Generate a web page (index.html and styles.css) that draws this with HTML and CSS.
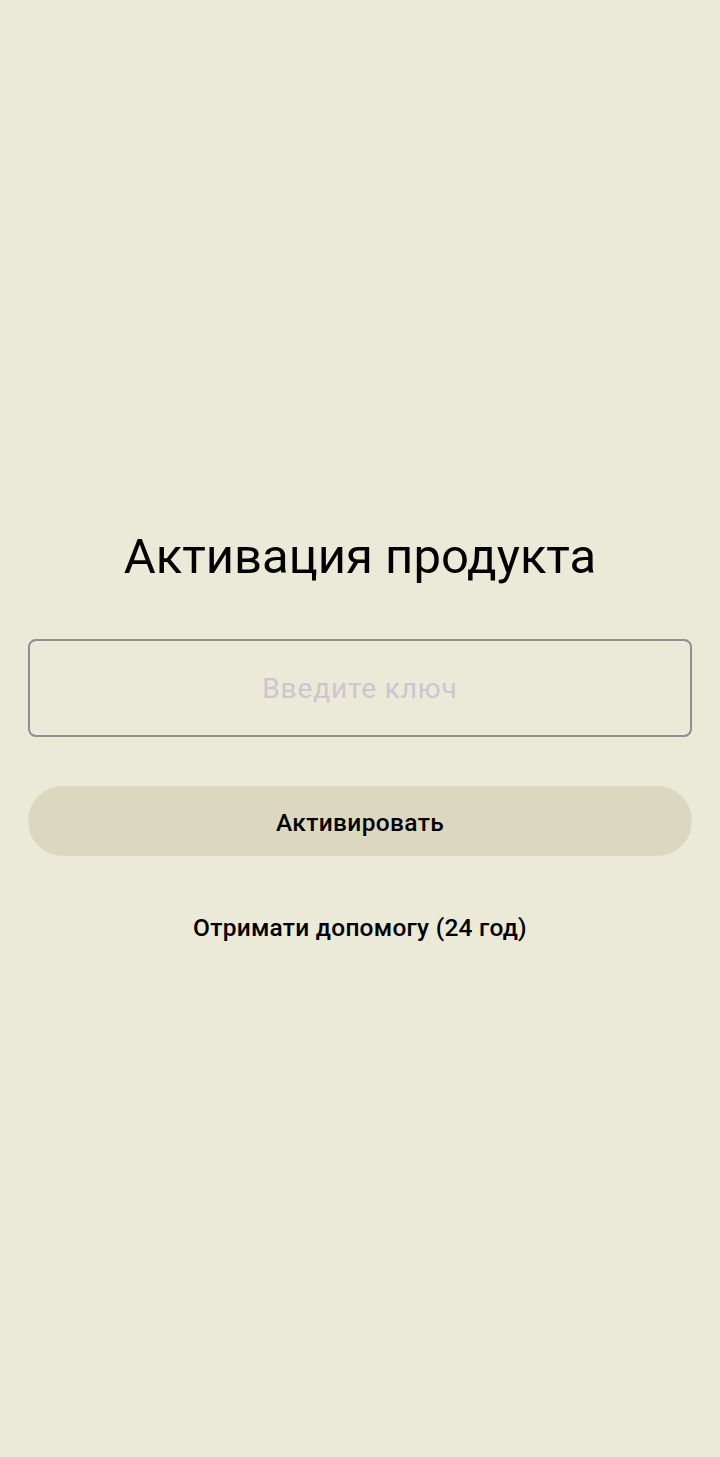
FILE: index.html
```html
<!DOCTYPE html>
<html lang="ru">
<head>
<meta charset="utf-8">
<title>Активация продукта</title>
<link rel="stylesheet" href="styles.css">
</head>
<body>
<main class="screen">
  <h1 class="title">Активация продукта</h1>
  <input class="key-input" type="text" placeholder="Введите ключ">
  <button class="activate-btn" type="button">Активировать</button>
  <a class="help-link" href="#">Отримати допомогу (24 год)</a>
</main>
</body>
</html>
```
FILE: styles.css
```css
html, body {
  margin: 0;
  padding: 0;
  background: #ebe9d7;
}
body {
  font-family: Roboto, "Noto Sans", sans-serif;
  color: #000;
}
.screen {
  box-sizing: border-box;
  width: 720px;
  height: 1457px;
  padding: 522px 28px 0;
  display: flex;
  flex-direction: column;
  align-items: stretch;
}
.title {
  margin: 0;
  font-size: 49px;
  font-weight: 400;
  line-height: 70px;
  text-align: center;
}
.key-input {
  box-sizing: border-box;
  margin-top: 47px;
  height: 98px;
  width: 100%;
  border: 2px solid #918e96;
  border-radius: 8px;
  background: transparent;
  font-family: Roboto, sans-serif;
  font-size: 28px;
  letter-spacing: 0.875px;
  text-align: center;
  color: #000;
  outline: none;
  padding: 0 16px;
}
.key-input::placeholder {
  color: #cbc6d2;
}
.activate-btn {
  margin-top: 49px;
  height: 70px;
  width: 100%;
  border: none;
  border-radius: 35px;
  background: #dcd8bf;
  font-family: Roboto, sans-serif;
  font-size: 24.5px;
  font-weight: 500;
  color: #000;
  letter-spacing: 0.35px;
  padding: 2px 0 0;
}
.help-link {
  margin-top: 52px;
  align-self: center;
  font-size: 24.5px;
  font-weight: 500;
  color: #000;
  text-decoration: none;
  line-height: 40px;
  letter-spacing: 0.25px;
}
```
